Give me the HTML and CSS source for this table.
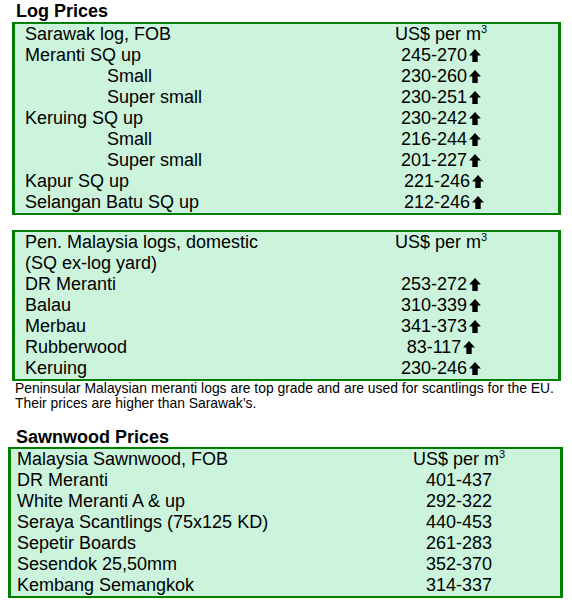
FILE: index.html
```html
<!DOCTYPE html>
<html>
<head>
<meta charset="utf-8">
<link rel="stylesheet" href="styles.css">
</head>
<body>
<div class="page">
  <h2 class="title">Log Prices</h2>
  <div class="box box-log">
    <div class="row"><span class="name">Sarawak log, FOB</span><span class="val">US$ per m<sup>3</sup></span></div>
    <div class="row"><span class="name">Meranti SQ up</span><span class="val">245-270<svg class="up" viewBox="0 0 11 12"><path d="M5.5 0 L11 6 H8 V12 H3 V6 H0 Z"/></svg></span></div>
    <div class="row"><span class="name sub">Small</span><span class="val">230-260<svg class="up" viewBox="0 0 11 12"><path d="M5.5 0 L11 6 H8 V12 H3 V6 H0 Z"/></svg></span></div>
    <div class="row"><span class="name sub">Super small</span><span class="val">230-251<svg class="up" viewBox="0 0 11 12"><path d="M5.5 0 L11 6 H8 V12 H3 V6 H0 Z"/></svg></span></div>
    <div class="row"><span class="name">Keruing SQ up</span><span class="val">230-242<svg class="up" viewBox="0 0 11 12"><path d="M5.5 0 L11 6 H8 V12 H3 V6 H0 Z"/></svg></span></div>
    <div class="row"><span class="name sub">Small</span><span class="val">216-244<svg class="up" viewBox="0 0 11 12"><path d="M5.5 0 L11 6 H8 V12 H3 V6 H0 Z"/></svg></span></div>
    <div class="row"><span class="name sub">Super small</span><span class="val">201-227<svg class="up" viewBox="0 0 11 12"><path d="M5.5 0 L11 6 H8 V12 H3 V6 H0 Z"/></svg></span></div>
    <div class="row"><span class="name">Kapur SQ up</span><span class="val shift">221-246<svg class="up" viewBox="0 0 11 12"><path d="M5.5 0 L11 6 H8 V12 H3 V6 H0 Z"/></svg></span></div>
    <div class="row"><span class="name">Selangan Batu SQ up</span><span class="val shift">212-246<svg class="up" viewBox="0 0 11 12"><path d="M5.5 0 L11 6 H8 V12 H3 V6 H0 Z"/></svg></span></div>
  </div>

  <div class="box box-log box-pen">
    <div class="row"><span class="name">Pen. Malaysia logs, domestic</span><span class="val">US$ per m<sup>3</sup></span></div>
    <div class="row"><span class="name">(SQ ex-log yard)</span><span class="val"></span></div>
    <div class="row"><span class="name">DR Meranti</span><span class="val">253-272<svg class="up" viewBox="0 0 11 12"><path d="M5.5 0 L11 6 H8 V12 H3 V6 H0 Z"/></svg></span></div>
    <div class="row"><span class="name">Balau</span><span class="val">310-339<svg class="up" viewBox="0 0 11 12"><path d="M5.5 0 L11 6 H8 V12 H3 V6 H0 Z"/></svg></span></div>
    <div class="row"><span class="name">Merbau</span><span class="val">341-373<svg class="up" viewBox="0 0 11 12"><path d="M5.5 0 L11 6 H8 V12 H3 V6 H0 Z"/></svg></span></div>
    <div class="row"><span class="name">Rubberwood</span><span class="val">83-117<svg class="up" viewBox="0 0 11 12"><path d="M5.5 0 L11 6 H8 V12 H3 V6 H0 Z"/></svg></span></div>
    <div class="row"><span class="name">Keruing</span><span class="val">230-246<svg class="up" viewBox="0 0 11 12"><path d="M5.5 0 L11 6 H8 V12 H3 V6 H0 Z"/></svg></span></div>
  </div>
  <p class="note">Peninsular Malaysian meranti logs are top grade and are used for scantlings for the EU.<br>Their prices are higher than Sarawak’s.</p>

  <h2 class="title title-saw">Sawnwood Prices</h2>
  <div class="box box-saw">
    <div class="row"><span class="name">Malaysia Sawnwood, FOB</span><span class="val">US$ per m<sup>3</sup></span></div>
    <div class="row"><span class="name">DR Meranti</span><span class="val">401-437</span></div>
    <div class="row"><span class="name">White Meranti A &amp; up</span><span class="val">292-322</span></div>
    <div class="row"><span class="name">Seraya Scantlings (75x125 KD)</span><span class="val">440-453</span></div>
    <div class="row"><span class="name">Sepetir Boards</span><span class="val">261-283</span></div>
    <div class="row"><span class="name">Sesendok 25,50mm</span><span class="val">352-370</span></div>
    <div class="row"><span class="name">Kembang Semangkok</span><span class="val">314-337</span></div>
  </div>
</div>
</body>
</html>
```

FILE: styles.css
```css
html, body {
  margin: 0;
  padding: 0;
  background: #ffffff;
}

.page {
  font-family: "Liberation Sans", Arial, sans-serif;
  color: #000000;
  width: 572px;
}

.title {
  margin: 1px 0 0 16px;
  font-size: 18px;
  line-height: 21px;
  font-weight: bold;
}

.title-saw {
  margin-top: 16px;
}

.box {
  background: #ccf4dc;
  border-style: solid;
  border-color: #008000;
  border-width: 2px 3px 2px 3px;
  font-size: 18px;
  line-height: 21px;
}

.box-log {
  margin-left: 12px;
  box-sizing: border-box;
  width: 549px;
  padding: 0 42px 0 10px;
}

.box-pen {
  margin-top: 15px;
}

.box-saw {
  margin-left: 8px;
  margin-top: -1px;
  box-sizing: border-box;
  width: 555px;
  padding: 0 26px 0 6px;
}

.row {
  display: grid;
  grid-template-columns: 1fr 150px;
  height: 21px;
}

.name {
  white-space: nowrap;
}

.name.sub {
  padding-left: 82px;
}

.val {
  text-align: center;
  white-space: nowrap;
}

.val.shift {
  padding-left: 6px;
}

.val sup {
  font-size: 11px;
  line-height: 0;
  vertical-align: 7px;
}

.up {
  width: 12px;
  height: 13px;
  margin-left: 2px;
  vertical-align: -1px;
  fill: #000000;
}

.note {
  margin: 0 0 0 15px;
  font-size: 13.9px;
  line-height: 15px;
}
```
